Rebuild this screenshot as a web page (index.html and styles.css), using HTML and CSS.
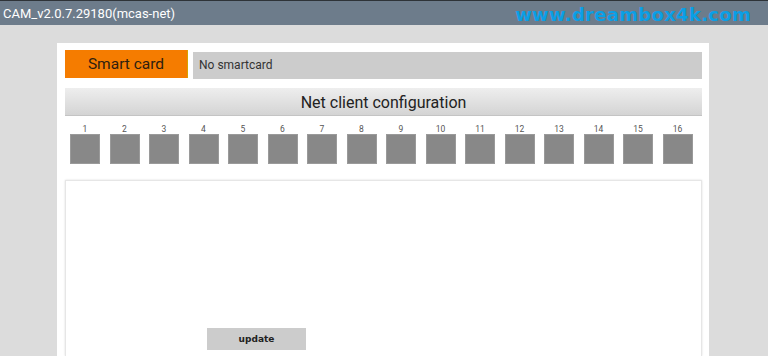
FILE: index.html
```html
<!DOCTYPE html>
<html>
    <head>
        <meta charset="utf-8">
        <meta name="viewport" content="width=device-width, initial-scale=1">
        <title>CAM</title>
        <link rel="stylesheet" href="styles.css">
    </head>
    <body>
        <div class="titlebar">
            <span class="app-title">CAM_v2.0.7.29180(mcas-net)</span>
            <span class="watermark">www.dreambox4k.com</span>
        </div>
        <div class="screen">
            <div class="panel">
                <div class="card-row">
                    <button class="card-btn">Smart card</button>
                    <div class="card-status">No smartcard</div>
                </div>
                <div class="net-bar">Net client configuration</div>
                <!-- 16 client slots -->
                <div class="slots">
                    <div class="slot"><span>1</span><div class="box"></div></div>
                    <div class="slot"><span>2</span><div class="box"></div></div>
                    <div class="slot"><span>3</span><div class="box"></div></div>
                    <div class="slot"><span>4</span><div class="box"></div></div>
                    <div class="slot"><span>5</span><div class="box"></div></div>
                    <div class="slot"><span>6</span><div class="box"></div></div>
                    <div class="slot"><span>7</span><div class="box"></div></div>
                    <div class="slot"><span>8</span><div class="box"></div></div>
                    <div class="slot"><span>9</span><div class="box"></div></div>
                    <div class="slot"><span>10</span><div class="box"></div></div>
                    <div class="slot"><span>11</span><div class="box"></div></div>
                    <div class="slot"><span>12</span><div class="box"></div></div>
                    <div class="slot"><span>13</span><div class="box"></div></div>
                    <div class="slot"><span>14</span><div class="box"></div></div>
                    <div class="slot"><span>15</span><div class="box"></div></div>
                    <div class="slot"><span>16</span><div class="box"></div></div>
                </div>
                <div class="details">
                    <button class="update-btn">update</button>
                </div>
            </div>
        </div>
    </body>
</html>
```

FILE: styles.css
```css
html, body {
    margin: 0;
    height: 100%;
    overflow: hidden;
}

body {
    font-family: Roboto, "Liberation Sans", sans-serif;
    background-color: #dcdcdc;
}

.titlebar {
    height: 24px;
    border-top: 1px solid #2e3338;
    background-color: #6d7c8b;
    display: flex;
    align-items: center;
    justify-content: space-between;
    padding: 0 17px 0 3px;
}

.app-title {
    color: #ffffff;
    font-size: 13px;
}

.watermark {
    color: #0a9fe6;
    font-family: "DejaVu Sans", sans-serif;
    font-weight: bold;
    font-size: 18px;
    letter-spacing: 0.3px;
    padding-top: 3px;
}

.screen {
    padding: 18px 0 0 57px;
}

.panel {
    width: 637px;
    height: 306px;
    background-color: #ffffff;
    padding: 7px 7px 0 8px;
}

.card-row {
    display: flex;
    gap: 5px;
    height: 28px;
}

.card-btn {
    width: 123px;
    border: none;
    border-right: 1px solid #d8a200;
    background-color: #f57c00;
    color: #2e2010;
    font-family: Roboto, "Liberation Sans", sans-serif;
    font-size: 15.5px;
    padding: 0;
}

.card-status {
    flex: 1;
    margin-top: 2px;
    height: 27px;
    background-color: #cccccc;
    color: #333;
    font-size: 12px;
    line-height: 27px;
    padding-left: 6px;
}

.net-bar {
    margin-top: 10px;
    height: 28px;
    line-height: 29px;
    text-align: center;
    font-size: 16px;
    color: #222;
    background: linear-gradient(#eeeeee, #d4d4d4);
    border-bottom: 1px solid #c4c4c4;
    box-sizing: border-box;
}

.slots {
    display: grid;
    grid-template-columns: repeat(16, 30px);
    column-gap: 9.5px;
    margin: 7px 0 0 5px;
}

.slot {
    text-align: center;
    font-size: 8.5px;
    color: #555;
}

.slot span {
    display: block;
    height: 11px;
    line-height: 12px;
}

.box {
    height: 30px;
    background-color: #888888;
    border: 1px solid #9a9a9a;
    box-sizing: border-box;
}

.details {
    margin-top: 16px;
    height: 176px;
    border: 1px solid #e6e6e6;
    border-bottom: none;
    box-shadow: 0 0 2px #dddddd;
    padding: 146px 0 0 141px;
    box-sizing: border-box;
}

.update-btn {
    width: 99px;
    height: 22px;
    border: none;
    background-color: #cccccc;
    color: #222;
    font-family: "DejaVu Sans", sans-serif;
    font-weight: bold;
    font-size: 9px;
    padding: 0;
}
```
